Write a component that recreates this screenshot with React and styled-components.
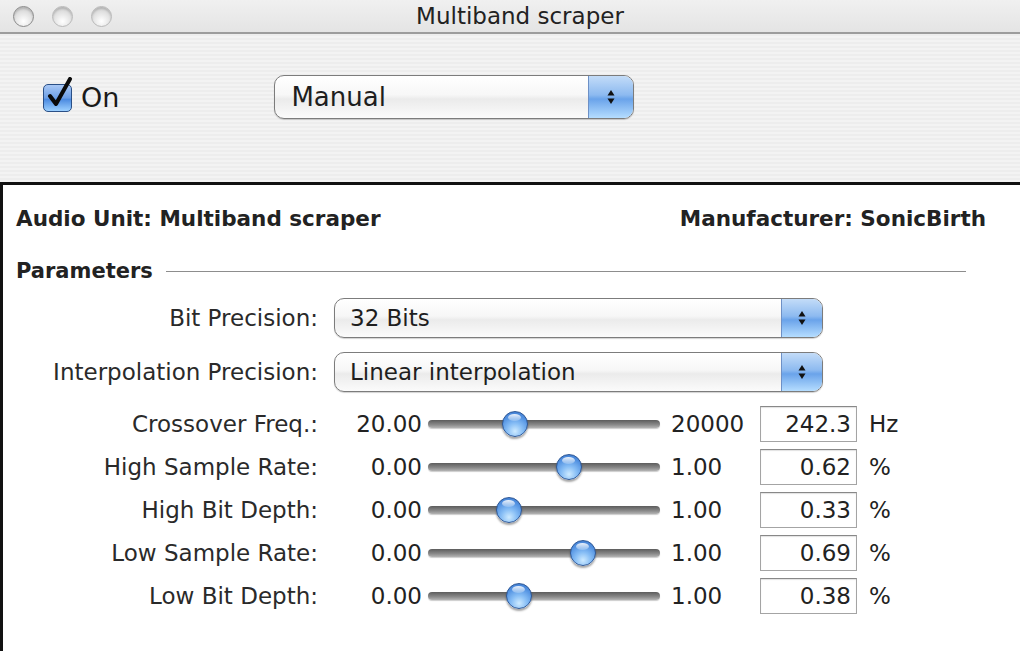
import React from "react";
import styled, { createGlobalStyle } from "styled-components";

const Global = createGlobalStyle`
  html, body { margin: 0; padding: 0; }
  body {
    width: 1020px; height: 651px; overflow: hidden;
    font-family: "DejaVu Sans", "Liberation Sans", sans-serif;
    color: #1e1e1e;
    background: #fff;
  }
`;

const Window = styled.div`
  width: 1020px;
  height: 651px;
  display: flex;
  flex-direction: column;
`;

const TitleBar = styled.div`
  height: 32px;
  flex: none;
  display: flex;
  align-items: center;
  position: relative;
  background: linear-gradient(#f0f0f0, #e4e4e4);
  border-bottom: 2px solid #9c9c9c;
`;

const Lights = styled.div`
  display: flex;
  gap: 18px;
  padding-left: 13px;
`;

const Light = styled.span`
  width: 21px;
  height: 21px;
  border-radius: 50%;
  box-sizing: border-box;
  border: 1.5px solid ${(p) => (p.$dark ? "#8a8a8a" : "#b9b9b9")};
  background: radial-gradient(circle at 50% 75%, #ffffff 0%, #e6e6e6 45%, #c8c8c8 100%);
  box-shadow: inset 0 2px 2px rgba(0,0,0,0.15);
`;

const Title = styled.div`
  position: absolute;
  left: 20px; right: 0; top: 0; bottom: 0;
  display: flex;
  align-items: center;
  justify-content: center;
  font-size: 23px;
  color: #222;
  pointer-events: none;
`;

const Toolbar = styled.div`
  height: 148px;
  flex: none;
  box-sizing: border-box;
  padding: 41px 0 0 43px;
  display: flex;
  align-items: flex-start;
  background: repeating-linear-gradient(#ededed 0px, #ededed 2px, #f3f3f3 2px, #f3f3f3 4px);
`;

const CheckWrap = styled.label`
  display: flex;
  align-items: center;
  height: 44px;
  gap: 9px;
  font-size: 27px;
  color: #1a1a1a;
  margin-right: 155px;
`;

const CheckBox = styled.span`
  position: relative;
  width: 29px;
  height: 28px;
  box-sizing: border-box;
  border-radius: 5px;
  border: 1.5px solid #2a4f86;
  background: linear-gradient(#a9c8f5 0%, #6d9fe6 50%, #4b8ae0 55%, #9cd0ff 100%);
  margin-top: 2px;
`;

const Popup = styled.div`
  width: ${(p) => p.$w}px;
  height: ${(p) => p.$h}px;
  box-sizing: border-box;
  display: flex;
  align-items: stretch;
  border: 1.5px solid #7c7c7c;
  border-radius: 10px;
  overflow: hidden;
  background: linear-gradient(#ffffff 0%, #f7f7f7 45%, #ebebeb 55%, #fbfbfb 100%);
  box-shadow: 0 1px 1px rgba(0,0,0,0.18);
`;

const PopupText = styled.div`
  flex: 1;
  display: flex;
  align-items: center;
  padding-left: ${(p) => p.$pad}px;
  font-size: ${(p) => p.$fs}px;
  color: #1e1e1e;
`;

const PopupArrow = styled.div`
  width: ${(p) => p.$w}px;
  flex: none;
  display: flex;
  align-items: center;
  justify-content: center;
  border-left: 1px solid #6d90c6;
  background: linear-gradient(#c3dcf8 0%, #8dbaf0 45%, #6aa3ea 55%, #b5ddff 100%);
`;

const Content = styled.div`
  flex: 1;
  background: #fff;
  border-top: 3px solid #111;
  border-left: 3px solid #111;
  display: flex;
  flex-direction: column;
`;

const Header = styled.div`
  display: flex;
  justify-content: space-between;
  align-items: center;
  height: 24px;
  margin-top: 21px;
  padding: 0 34px 0 13px;
  font-weight: bold;
  font-size: 21.5px;
  color: #222;
`;

const Section = styled.div`
  display: flex;
  align-items: center;
  height: 24px;
  margin-top: 29px;
  padding-left: 13px;
  font-weight: bold;
  font-size: 21px;
  color: #222;
`;

const Rule = styled.div`
  width: 800px;
  height: 1px;
  background: #8d8d8d;
  margin-left: 13px;
`;

const Rows = styled.div`
  display: flex;
  flex-direction: column;
  margin-top: 8px;
`;

const Row = styled.div`
  display: grid;
  grid-template-columns: 315px auto;
  column-gap: 16px;
  align-items: center;
  height: ${(p) => p.$h}px;
  margin-top: ${(p) => p.$mt || 0}px;
`;

const Label = styled.div`
  text-align: right;
  font-size: 23px;
  color: #2a2a2a;
  white-space: nowrap;
`;

const SliderLine = styled.div`
  display: flex;
  align-items: center;
  font-size: 23px;
  color: #222;
`;

const MinVal = styled.div`
  width: 88px;
  text-align: right;
`;

const Track = styled.div`
  position: relative;
  width: 232px;
  height: 8px;
  margin-left: 6px;
  border-radius: 4px;
  background: linear-gradient(#5c5c5c, #8a8a8a 60%, #b4b4b4);
  box-shadow: 0 1px 1px rgba(0,0,0,0.2);
`;

const Knob = styled.span`
  position: absolute;
  top: 50%;
  width: 26px;
  height: 26px;
  margin-left: -13px;
  margin-top: -13px;
  box-sizing: border-box;
  border-radius: 50%;
  border: 1.5px solid #2d5796;
  background: radial-gradient(circle at 50% 80%, #cdeaff 0%, #86bdf5 35%, #4f8fe0 70%, #3d78cc 100%);
  box-shadow: 0 2px 2px rgba(0,0,0,0.35);
  &::after {
    content: "";
    position: absolute;
    left: 5px; top: 2px;
    width: 13px; height: 7px;
    border-radius: 50%;
    background: linear-gradient(rgba(255,255,255,0.9), rgba(255,255,255,0.2));
  }
`;

const MaxVal = styled.div`
  width: 89px;
  margin-left: 11px;
`;

const ValueBox = styled.div`
  width: 97px;
  height: 36px;
  box-sizing: border-box;
  border: 1px solid #a4a4a4;
  border-top-color: #888;
  box-shadow: inset 0 1px 1px rgba(0,0,0,0.12);
  text-align: right;
  padding-right: 5px;
  line-height: 34px;
  font-size: 23px;
  color: #222;
`;

const Unit = styled.div`
  margin-left: 12px;
  font-size: 23px;
`;

const Updown = () => (
  <svg width="10" height="20" viewBox="0 0 10 20">
    <path d="M5 3 L8.5 8.5 L1.5 8.5 Z" fill="#111" />
    <path d="M5 17 L8.5 11.5 L1.5 11.5 Z" fill="#111" />
  </svg>
);

const Check = () => (
  <svg
    width="30"
    height="34"
    viewBox="0 0 30 34"
    style={{ position: "absolute", left: 1, top: -8 }}
  >
    <path
      d="M5 19 L11 27 L25 2"
      fill="none"
      stroke="#0a0a0a"
      strokeWidth="4"
      strokeLinecap="round"
      strokeLinejoin="round"
    />
  </svg>
);

const sliders = [
  { label: "Crossover Freq.:", min: "20.00", max: "20000", value: "242.3", unit: "Hz", pos: 0.361 },
  { label: "High Sample Rate:", min: "0.00", max: "1.00", value: "0.62", unit: "%", pos: 0.62 },
  { label: "High Bit Depth:", min: "0.00", max: "1.00", value: "0.33", unit: "%", pos: 0.33 },
  { label: "Low Sample Rate:", min: "0.00", max: "1.00", value: "0.69", unit: "%", pos: 0.69 },
  { label: "Low Bit Depth:", min: "0.00", max: "1.00", value: "0.38", unit: "%", pos: 0.38 },
];

export default function App() {
  return (
    <Window>
      <Global />
      <TitleBar>
        <Lights>
          <Light $dark />
          <Light />
          <Light />
        </Lights>
        <Title>Multiband scraper</Title>
      </TitleBar>
      <Toolbar>
        <CheckWrap>
          <CheckBox>
            <Check />
          </CheckBox>
          On
        </CheckWrap>
        <Popup $w={360} $h={44}>
          <PopupText $pad={16} $fs={26}>Manual</PopupText>
          <PopupArrow $w={44}>
            <Updown />
          </PopupArrow>
        </Popup>
      </Toolbar>
      <Content>
        <Header>
          <span>Audio Unit: Multiband scraper</span>
          <span>Manufacturer: SonicBirth</span>
        </Header>
        <Section>
          Parameters
          <Rule />
        </Section>
        <Rows>
          <Row $h={54}>
            <Label>Bit Precision:</Label>
            <Popup $w={489} $h={40}>
              <PopupText $pad={15} $fs={23}>32 Bits</PopupText>
              <PopupArrow $w={40}>
                <Updown />
              </PopupArrow>
            </Popup>
          </Row>
          <Row $h={54}>
            <Label>Interpolation Precision:</Label>
            <Popup $w={489} $h={40}>
              <PopupText $pad={15} $fs={23}>Linear interpolation</PopupText>
              <PopupArrow $w={40}>
                <Updown />
              </PopupArrow>
            </Popup>
          </Row>
          {sliders.map((s, i) => (
            <Row key={s.label} $h={43} $mt={i === 0 ? 3 : 0}>
              <Label>{s.label}</Label>
              <SliderLine>
                <MinVal>{s.min}</MinVal>
                <Track>
                  <Knob style={{ left: `${13 + s.pos * 206}px` }} />
                </Track>
                <MaxVal>{s.max}</MaxVal>
                <ValueBox>{s.value}</ValueBox>
                <Unit>{s.unit}</Unit>
              </SliderLine>
            </Row>
          ))}
        </Rows>
      </Content>
    </Window>
  );
}
